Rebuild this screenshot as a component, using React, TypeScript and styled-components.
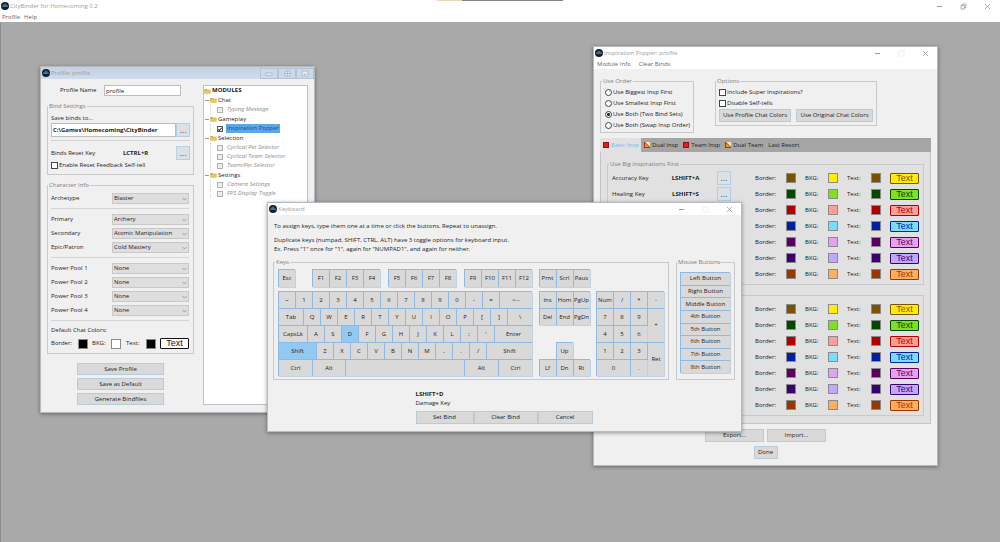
import React from "react";
import styled, { createGlobalStyle, css } from "styled-components";

const GlobalStyle = createGlobalStyle`
  *, *::before, *::after { box-sizing: border-box; }
  body {
    margin: 0;
    background: #a9a9a9;
    color: #1c1c1c;
    font: 6px/9px "Open Sans", "Noto Sans", sans-serif;
  }
  button, input, select { font: inherit; color: inherit; margin: 0; }
`;

/* ---------- shared parts ---------- */

const Shell = styled.div`
  display: flex;
  flex-direction: column;
  min-height: 100vh;
`;

const AppHeader = styled.header`
  height: 22px;
  background: #fff;
  color: #8a8a8a;
`;

const Notch = styled.div`
  position: absolute;
  top: 0;
  left: 50%;
  width: 126px;
  height: 1px;
  margin-left: -63px;
  background: linear-gradient(90deg, #e8d9b4 0 20%, #858585 20% 100%);
`;

const TitleBar = styled.div<{ $tone?: "blue" }>`
  display: flex;
  align-items: center;
  height: 12px;
  padding-left: 1px;
  gap: 1px;
  color: #9d9d9d;
  background: ${(p) => (p.$tone === "blue" ? "linear-gradient(#c3d1e0, #cfdceb)" : "#fff")};
`;

const TitleText = styled.span`
  flex: 1;
`;

const WindowControls = styled.div<{ $right: number }>`
  display: flex;
  align-items: center;
  gap: 16px;
  padding-right: ${(p) => p.$right}px;
`;

const FrameControls = styled.div`
  display: flex;
`;

const ControlButton = styled.button`
  display: flex;
  align-items: center;
  justify-content: center;
  width: 8px;
  height: 10px;
  padding: 0;
  border: 0;
  background: none;
`;

const FrameButton = styled(ControlButton)`
  width: 18px;
  height: 11px;
  border: 1px solid #b3c3d6;
  background: #ccd9e7;
`;

const MenuBar = styled.nav<{ $gap: number }>`
  display: flex;
  gap: ${(p) => p.$gap}px;
  height: 10px;
  padding: 1px 2px 0;
`;

const MenuButton = styled.button`
  padding: 0;
  border: 0;
  background: none;
  color: #666;
`;

const Desktop = styled.main`
  position: relative;
  flex: 1;
  border-left: 1px solid #8d8d8d;
  background: #a9a9a9;
`;

const Window = styled.section<{ $x: number; $y: number; $w: number }>`
  position: absolute;
  left: ${(p) => p.$x}px;
  top: ${(p) => p.$y}px;
  width: ${(p) => p.$w}px;
  border: 1px solid #b4bac0;
  background: #f0f0f0;
  box-shadow: 0 1px 4px rgba(0, 0, 0, 0.4);
`;

const Group = styled.fieldset<{ $pad: string; $w?: number }>`
  width: ${(p) => (p.$w ? `${p.$w}px` : "auto")};
  min-width: 0;
  margin: 0;
  padding: ${(p) => p.$pad};
  border: 1px solid #c9c9c9;
`;

const GroupTitle = styled.legend`
  height: 9px;
  margin-left: -3px;
  padding: 0 1px;
  color: #7d7d7d;
`;

const PushButton = styled.button<{ $w?: number; $h?: number }>`
  width: ${(p) => (p.$w ? `${p.$w}px` : "auto")};
  height: ${(p) => p.$h ?? 13}px;
  padding: 0;
  border: 1px solid #b9cbd9;
  background: #d9d9d9;
  white-space: nowrap;
`;

const DotsButton = styled(PushButton)`
  flex: none;
  width: 14px;
  height: 14px;
  padding-bottom: 2px;
  background: #dce1e6;
  border-color: #b4d0e6;
  color: #555;
  font-size: 9px;
  font-weight: 400;
`;

const CheckLabel = styled.label`
  display: flex;
  align-items: center;
  gap: 1px;
  height: 11px;
  white-space: nowrap;
`;

const CheckBox = styled.input`
  appearance: none;
  flex: none;
  width: 7px;
  height: 7px;
  border: 1px solid #444;
  background: #fff;
`;

const Radio = styled(CheckBox)`
  border-radius: 50%;
  &:checked {
    background: radial-gradient(circle, #222 0 1px, #fff 2px);
  }
`;

const Swatch = styled.button<{ $color: string }>`
  width: 10px;
  height: 10px;
  padding: 0;
  border: 1px solid #8a8a8a;
  background: ${(p) => p.$color};
`;

const Preview = styled.output<{ $ink: string; $fill: string }>`
  display: block;
  height: 11px;
  border: 1px solid ${(p) => p.$ink};
  border-radius: 1px;
  background: ${(p) => p.$fill};
  color: ${(p) => p.$ink};
  font: 9px/9px "Liberation Sans", sans-serif;
  text-align: center;
`;

/* ---------- icons ---------- */

const AppIcon = () => (
  <svg width="8" height="8" viewBox="0 0 16 16" aria-hidden="true">
    <circle cx="8" cy="8" r="8" fill="#10202f" />
    <path d="M2 9h12M4 9V6h2v3M7 9V4h2v5M10 9V6h2v3" stroke="#5f8fb8" strokeWidth="1.2" fill="none" />
  </svg>
);

const Minimize = () => (
  <svg width="7" height="7" aria-hidden="true"><path d="M1 3.500h5" stroke="#999" /></svg>
);
const Maximize = () => (
  <svg width="7" height="7" aria-hidden="true"><rect x="1" y="1" width="5" height="5" fill="none" stroke="#ececec" strokeWidth=".8" /></svg>
);
const Restore = () => (
  <svg width="7" height="7" aria-hidden="true">
    <path d="M1 2.500h3.500V6H1zM2.500 2.500V1H6v3.500H4.500" fill="none" stroke="#999" strokeWidth=".8" />
  </svg>
);
const Close = () => (
  <svg width="7" height="7" aria-hidden="true"><path d="M1 1l5 5M6 1L1 6" stroke="#999" strokeWidth=".8" /></svg>
);
const FrameMin = () => (
  <svg width="8" height="7" aria-hidden="true"><rect x="1" y="3" width="6" height="2.500" fill="#e6eef6" stroke="#9dabba" strokeWidth=".7" /></svg>
);
const FrameMax = () => (
  <svg width="7" height="7" aria-hidden="true"><path d="M1 1h5v5H1zM1 3.500h5M3.500 1v5" fill="#e6eef6" stroke="#9dabba" strokeWidth=".7" /></svg>
);
const FrameClose = () => (
  <svg width="8" height="7" aria-hidden="true"><path d="M1 1h6v5H1zM2.500 3.500L4 5l1.500-1.500" fill="#e6eef6" stroke="#9dabba" strokeWidth=".7" /></svg>
);
const Folder = () => (
  <svg width="7" height="6" viewBox="0 0 7 6" aria-hidden="true">
    <path d="M.3 1h2.400l.6.700H6.500V5.500H.3z" fill="#d2a93c" />
    <path d="M1.200 2.500H7L6.300 5.500H.5z" fill="#ecc967" />
  </svg>
);
const Chevron = styled.svg`
  grid-area: 1 / 1;
  justify-self: end;
  align-self: center;
  margin-right: 2px;
  pointer-events: none;
`;

const SystemControls = ({ restore = false }) => (
  <WindowControls $right={restore ? 9 : 8}>
    <ControlButton aria-label="Minimize"><Minimize /></ControlButton>
    <ControlButton aria-label="Maximize">{restore ? <Restore /> : <Maximize />}</ControlButton>
    <ControlButton aria-label="Close"><Close /></ControlButton>
  </WindowControls>
);

/* ---------- profile window ---------- */

const ProfileBody = styled.div`
  display: flex;
  justify-content: space-between;
  padding: 6px 6px 7px;
`;

const ProfileForm = styled.form`
  display: flex;
  flex-direction: column;
  gap: 6px;
  width: 147px;
`;

const NameRow = styled.div`
  display: grid;
  grid-template-columns: 44px 77px;
  align-items: center;
  padding-left: 13px;
`;

const TextBox = styled.input<{ $h: number }>`
  min-width: 0;
  width: 100%;
  height: ${(p) => p.$h}px;
  padding: 0 1px;
  border: 1px solid #bdbdbd;
  background: #fff;
`;

const PathRow = styled.div`
  display: flex;
  font-weight: 700;
`;

const ResetRow = styled.div`
  display: flex;
  align-items: center;
  justify-content: space-between;
`;

const Rule = styled.hr<{ $m: string }>`
  margin: ${(p) => p.$m};
  border: 0;
  border-top: 1px solid #d4d4d4;
`;

const FieldList = styled.div`
  display: grid;
  grid-template-columns: 1fr 77px;
  row-gap: 3px;
  align-items: center;
`;

const SelectWrap = styled.div`
  display: grid;
`;

const Select = styled.select`
  grid-area: 1 / 1;
  appearance: none;
  height: 11px;
  padding: 0 1px;
  border: 1px solid #c8c8c8;
  border-radius: 0;
  background: #dedede;
`;

const ChatRow = styled.div`
  display: grid;
  grid-template-columns: 27px 14px 19px 15px 20px 1fr 29px;
  align-items: center;
  margin-top: 3px;
`;

const SaveButtons = styled.div`
  display: flex;
  flex-direction: column;
  align-items: center;
  gap: 3px;
  margin-top: 3px;
`;

const Tree = styled.ul`
  width: 105px;
  margin: 0;
  padding: 0;
  list-style: none;
  border: 1px solid #bcc2c8;
  background: #fff;
`;

const SubTree = styled.ul`
  margin: 0;
  padding: 0;
  list-style: none;
`;

const TreeHead = styled.div<{ $root?: boolean }>`
  display: flex;
  align-items: center;
  gap: 1px;
  height: ${(p) => (p.$root ? 9 : 10)}px;
  padding-left: ${(p) => (p.$root ? 0 : 1)}px;
  font-weight: ${(p) => (p.$root ? 700 : 400)};
`;

const Expander = styled.span`
  width: 4px;
  height: 1px;
  background: #9a9a9a;
`;

const TreeItem = styled.label<{ $on?: boolean }>`
  display: flex;
  align-items: center;
  gap: 3px;
  height: 9px;
  margin-left: 6px;
  padding-left: 6px;
  border-left: 1px dotted #d0d0d0;
  color: #8b8b8b;
  font-style: italic;
  ${(p) => p.$on && css`
    color: #1d4f7d;
    font-style: normal;
  `}
`;

const TreeName = styled.span<{ $on?: boolean }>`
  padding: 0 1px;
  background: ${(p) => (p.$on ? "#5ba8e8" : "none")};
`;

const TreeCheck = styled(CheckBox)`
  width: 6px;
  height: 6px;
  border-color: #b0b0b0;
  background: #eee;
  &:checked {
    border-color: #555;
    background: #fff;
  }
  &:checked::after {
    content: "";
    display: block;
    width: 2px;
    height: 4px;
    margin-left: 1px;
    border: solid #222;
    border-width: 0 1px 1px 0;
    transform: rotate(40deg);
  }
`;

const MODULES: { name: string; items: string[] }[] = [
  { name: "Chat", items: ["Typing Message"] },
  { name: "Gameplay", items: ["Inspiration Popper"] },
  { name: "Selection", items: ["Cyclical Pet Selector", "Cyclical Team Selector", "Team/Pet Selector"] },
  { name: "Settings", items: ["Camera Settings", "FPS Display Toggle"] },
];

const PICKS: [string, string][][] = [
  [["Archetype", "Blaster"]],
  [["Primary", "Archery"], ["Secondary", "Atomic Manipulation"], ["Epic/Patron", "Cold Mastery"]],
  [["Power Pool 1", "None"], ["Power Pool 2", "None"], ["Power Pool 3", "None"], ["Power Pool 4", "None"]],
];

const Picker = ({ label, value }: { label: string; value: string }) => {
  const id = label.replace(/\W/g, "-").toLowerCase();
  return (
    <>
      <label htmlFor={id}>{label}</label>
      <SelectWrap>
        <Select id={id} defaultValue={value}><option>{value}</option></Select>
        <Chevron width="5" height="4"><path d="M.5 1l2 2 2-2" fill="none" stroke="#888" strokeWidth=".7" /></Chevron>
      </SelectWrap>
    </>
  );
};

const ProfileWindow = () => (
  <Window $x={39} $y={44} $w={275}>
    <TitleBar $tone="blue">
      <AppIcon />
      <TitleText>Profile: profile</TitleText>
      <FrameControls>
        <FrameButton aria-label="Minimize"><FrameMin /></FrameButton>
        <FrameButton aria-label="Maximize"><FrameMax /></FrameButton>
        <FrameButton aria-label="Close"><FrameClose /></FrameButton>
      </FrameControls>
    </TitleBar>
    <ProfileBody>
      <ProfileForm>
        <NameRow>
          <label htmlFor="name">Profile Name</label>
          <TextBox id="name" $h={11} defaultValue="profile" />
        </NameRow>
        <Group $pad="3px">
          <GroupTitle>Bind Settings</GroupTitle>
          <label htmlFor="path">Save binds to...</label>
          <PathRow>
            <TextBox id="path" $h={14} defaultValue="C:\Games\Homecoming\CityBinder" />
            <DotsButton type="button" aria-label="Browse">...</DotsButton>
          </PathRow>
          <Rule $m="3px 0 5px" />
          <ResetRow>
            <span>Binds Reset Key</span>
            <b>LCTRL+R</b>
            <DotsButton type="button" aria-label="Change reset key">...</DotsButton>
          </ResetRow>
          <CheckLabel><CheckBox type="checkbox" />Enable Reset Feedback Self-tell</CheckLabel>
        </Group>
        <Group $pad="3px 4px 4px 3px">
          <GroupTitle>Character Info</GroupTitle>
          {PICKS.map((set, i) => (
            <React.Fragment key={i}>
              <FieldList>
                {set.map(([label, value]) => <Picker key={label} label={label} value={value} />)}
              </FieldList>
              <Rule $m="4px 0 5px" />
            </React.Fragment>
          ))}
          <div>Default Chat Colors:</div>
          <ChatRow>
            <label htmlFor="c-border">Border:</label>
            <Swatch type="button" id="c-border" $color="#000" />
            <label htmlFor="c-bkg">BKG:</label>
            <Swatch type="button" id="c-bkg" $color="#fff" />
            <label htmlFor="c-text">Text:</label>
            <Swatch type="button" id="c-text" $color="#000" />
            <Preview $ink="#111" $fill="#fff">Text</Preview>
          </ChatRow>
        </Group>
        <SaveButtons>
          <PushButton type="button" $w={87} $h={12}>Save Profile</PushButton>
          <PushButton type="button" $w={87} $h={12}>Save as Default</PushButton>
          <PushButton type="button" $w={87} $h={12}>Generate Bindfiles</PushButton>
        </SaveButtons>
      </ProfileForm>
      <Tree>
        <li>
          <TreeHead $root><Folder />MODULES</TreeHead>
          <SubTree>
            {MODULES.map((m) => (
              <li key={m.name}>
                <TreeHead><Expander /><Folder />{m.name}</TreeHead>
                {m.items.map((item) => {
                  const on = item === "Inspiration Popper";
                  return (
                    <TreeItem key={item} $on={on}>
                      <TreeCheck type="checkbox" defaultChecked={on} />
                      <TreeName $on={on}>{item}</TreeName>
                    </TreeItem>
                  );
                })}
              </li>
            ))}
          </SubTree>
        </li>
      </Tree>
    </ProfileBody>
  </Window>
);

/* ---------- inspiration window ---------- */

const PopperMenu = styled(MenuBar)`
  padding: 1px 3px 0;
  background: #fff;
`;

const PopperBody = styled.div`
  padding: 8px 6px 6px;
`;

const OptionRow = styled.div`
  display: flex;
  align-items: flex-start;
  gap: 21px;
  margin-bottom: 5px;
`;

const ButtonPair = styled.div<{ $gap: number }>`
  display: flex;
  justify-content: center;
  gap: ${(p) => p.$gap}px;
`;

const TabStrip = styled.div`
  display: flex;
  height: 14px;
  background: #a5a5a5;
`;

const Tab = styled.button<{ $active?: boolean }>`
  display: flex;
  align-items: center;
  gap: 2px;
  padding: 0 2px 0 3px;
  border: 0;
  background: ${(p) => (p.$active ? "#e1e1e1" : "none")};
  color: ${(p) => (p.$active ? "#7db4e6" : "#222")};
`;

const TabPanel = styled.div`
  display: flex;
  flex-direction: column;
  gap: 10px;
  padding: 8px 6px 7px;
  border: 1px solid #c4c4c4;
  border-top: 0;
  background: #e1e1e1;
`;

const BindRow = styled.div`
  display: grid;
  grid-template-columns: 42px 63px 1fr 31px 19px 23px 19px 24px 19px 29px;
  align-items: center;
  height: 16px;
`;

const Combo = styled.b`
  text-align: center;
`;

const DotsCell = styled.span`
  display: flex;
`;

const Footer = styled.div`
  display: flex;
  flex-direction: column;
  align-items: center;
  gap: 4px;
  margin-top: 5px;
`;

const RedIcon = () => (
  <svg width="6" height="6" aria-hidden="true"><rect width="6" height="6" fill="#8e1010" /><rect x="1" y="1" width="4" height="4" fill="#e02020" /></svg>
);
const DualIcon = () => (
  <svg width="6" height="6" aria-hidden="true"><rect width="6" height="6" fill="#b3261a" /><path d="M1 0h5v5z" fill="#f7e9a0" /><path d="M1 1v4h4z" fill="#f0a020" /></svg>
);

const COLORS: [string, string][] = [
  ["#7a5200", "#ffee00"],
  ["#004a00", "#80e020"],
  ["#b00000", "#ff9e98"],
  ["#0020a0", "#78dcff"],
  ["#5c0060", "#e6a2f2"],
  ["#380070", "#c0a8ff"],
  ["#983800", "#ffae60"],
];

const KEYS: Record<number, [string, string]> = {
  0: ["Accuracy Key", "LSHIFT+A"],
  1: ["Healing Key", "LSHIFT+S"],
};

const BindRows = ({ group, keys }: { group: string; keys: Record<number, [string, string]> }) => (
  <>
    {COLORS.map(([ink, fill], i) => {
      const id = `${group}-${i}`;
      return (
        <BindRow key={id}>
          <span>{keys[i]?.[0]}</span>
          <Combo>{keys[i]?.[1]}</Combo>
          <DotsCell>{keys[i] && <DotsButton aria-label={`Change ${keys[i][0]}`}>...</DotsButton>}</DotsCell>
          <label htmlFor={`${id}-b`}>Border:</label>
          <Swatch id={`${id}-b`} $color={ink} />
          <label htmlFor={`${id}-g`}>BKG:</label>
          <Swatch id={`${id}-g`} $color={fill} />
          <label htmlFor={`${id}-t`}>Text:</label>
          <Swatch id={`${id}-t`} $color={ink} />
          <Preview $ink={ink} $fill={fill}>Text</Preview>
        </BindRow>
      );
    })}
  </>
);

const ORDERS = ["Use Biggest Insp First", "Use Smallest Insp First", "Use Both (Two Bind Sets)", "Use Both (Swap Insp Order)"];

const PopperWindow = () => (
  <Window $x={592} $y={24} $w={345}>
    <TitleBar><AppIcon /><TitleText>Inspiration Popper: profile</TitleText><SystemControls /></TitleBar>
    <PopperMenu $gap={8}><MenuButton>Module Info</MenuButton><MenuButton>Clear Binds</MenuButton></PopperMenu>
    <PopperBody>
      <OptionRow>
        <Group $pad="1px 4px" $w={94}>
          <GroupTitle>Use Order</GroupTitle>
          {ORDERS.map((o, i) => (
            <CheckLabel key={o}><Radio type="radio" name="order" defaultChecked={i === 2} />{o}</CheckLabel>
          ))}
        </Group>
        <Group $pad="1px 3px 3px" $w={162}>
          <GroupTitle>Options</GroupTitle>
          <CheckLabel><CheckBox type="checkbox" />Include Super Inspirations?</CheckLabel>
          <CheckLabel><CheckBox type="checkbox" />Disable Self-tells</CheckLabel>
          <ButtonPair $gap={5}>
            <PushButton $w={72}>Use Profile Chat Colors</PushButton>
            <PushButton $w={77}>Use Original Chat Colors</PushButton>
          </ButtonPair>
        </Group>
      </OptionRow>
      <TabStrip role="tablist">
        <Tab role="tab" $active><RedIcon />Basic Insp</Tab>
        <Tab role="tab"><DualIcon />Dual Insp</Tab>
        <Tab role="tab"><RedIcon />Team Insp</Tab>
        <Tab role="tab"><DualIcon />Dual Team</Tab>
        <Tab role="tab">Last Resort</Tab>
      </TabStrip>
      <TabPanel role="tabpanel">
        <Group $pad="1px 4px 2px">
          <GroupTitle>Use Big Inspirations First</GroupTitle>
          <BindRows group="big" keys={KEYS} />
        </Group>
        <Group $pad="5px 4px 2px">
          <BindRows group="small" keys={{}} />
        </Group>
      </TabPanel>
      <Footer>
        <ButtonPair $gap={3}>
          <PushButton $w={59}>Export...</PushButton>
          <PushButton $w={59}>Import...</PushButton>
        </ButtonPair>
        <PushButton $w={24}>Done</PushButton>
      </Footer>
    </PopperBody>
  </Window>
);

/* ---------- keyboard window ---------- */

const KeyboardBody = styled.div`
  padding: 7px 6px 7px 5px;
`;

const Help = styled.p<{ $m: string }>`
  margin: ${(p) => p.$m};
`;

const Boards = styled.div`
  display: grid;
  grid-template-columns: 1fr 59px;
  gap: 7px;
`;

const KeyArea = styled.div`
  display: grid;
  grid-template-columns: 254px 51px 68px;
  grid-template-rows: 18px 85px;
  gap: 4px 0;
  justify-content: space-between;
`;

const KeyRows = styled.div`
  display: grid;
  grid-template-rows: repeat(5, 17px);
`;

const KeyRow = styled.div`
  display: flex;
`;

const KeyCluster = styled.div<{ $cols: number }>`
  display: grid;
  grid-template-columns: repeat(${(p) => p.$cols}, 17px);
  grid-auto-rows: 17px;
`;

const Key = styled.button<{ $w?: number; $on?: boolean; $area?: string; $gap?: number }>`
  flex: 0 0 ${(p) => p.$w ?? 17}px;
  min-width: 0;
  margin-left: ${(p) => p.$gap ?? 0}px;
  padding: 0;
  grid-area: ${(p) => p.$area ?? "auto"};
  border: 0 solid #8fb9e3;
  border-width: 1px 0 0 1px;
  background: ${(p) => (p.$on ? "#91c9f2" : "#d9d9d9")};
  box-shadow: 1px 1px 0 #c0d2e2;
  white-space: nowrap;
`;

const MouseKeys = styled.div`
  display: grid;
  grid-template-rows: repeat(8, 1fr);
  height: 101px;
`;

const BindPanel = styled.div`
  width: 177px;
  margin: 10px auto 0;
`;

const BindActions = styled.div`
  display: grid;
  grid-template-columns: 58px 64px 55px;
  margin-top: 3px;
`;

type K = [string, number?, boolean?];
const chars = (s: string): K[] => s.split("").map((c) => [c] as K);

const FUNCTION_KEYS: [string, number][] = [
  ["Esc", 0], ["F1", 17], ["F2", 0], ["F3", 0], ["F4", 0],
  ["F5", 8], ["F6", 0], ["F7", 0], ["F8", 0],
  ["F9", 8], ["F10", 0], ["F11", 0], ["F12", 0],
];

const MAIN_KEYS: K[][] = [
  [...chars("~1234567890-="), ["<--", 33]],
  [["Tab", 25], ...chars("QWERTYUIOP[]"), ["\\", 25]],
  [["CapsLk", 29], ...chars("AS"), ["D", 17, true], ...chars("FGHJKL;'"), ["Enter", 38]],
  [["Shift", 38, true], ...chars("ZXCVBNM,./"), ["Shift", 46]],
  [["Ctrl", 34], ["Alt", 33], ["", 119], ["Alt", 34], ["Ctrl", 34]],
];

const NAV_KEYS: [string, string][] = [
  ["Ins", "1 / 1"], ["Hom", "1 / 2"], ["PgUp", "1 / 3"],
  ["Del", "2 / 1"], ["End", "2 / 2"], ["PgDn", "2 / 3"],
  ["Up", "4 / 2"], ["Lf", "5 / 1"], ["Dn", "5 / 2"], ["Rt", "5 / 3"],
];

const PAD_KEYS: [string, string][] = [
  ["Num", "1 / 1"], ["/", "1 / 2"], ["*", "1 / 3"], ["-", "1 / 4"],
  ["7", "2 / 1"], ["8", "2 / 2"], ["9", "2 / 3"], ["+", "2 / 4 / 4 / 5"],
  ["4", "3 / 1"], ["5", "3 / 2"], ["6", "3 / 3"],
  ["1", "4 / 1"], ["2", "4 / 2"], ["3", "4 / 3"], ["Ret", "4 / 4 / 6 / 5"],
  ["0", "5 / 1 / 6 / 3"], [".", "5 / 3"],
];

const MOUSE_KEYS = ["Left Button", "Right Button", "Middle Button", "4th Button", "5th Button", "6th Button", "7th Button", "8th Button"];

const KeyboardWindow = () => (
  <Window $x={266} $y={180} $w={475}>
    <TitleBar><AppIcon /><TitleText>Keyboard</TitleText><SystemControls /></TitleBar>
    <KeyboardBody>
      <Help $m="0 1px 5px">To assign keys, type them one at a time or click the buttons. Repeat to unassign.</Help>
      <Help $m="0 1px 4px">
        Duplicate keys (numpad, SHIFT, CTRL, ALT) have 3 toggle options for keyboard input.<br />
        Ex. Press "1" once for "1", again for "NUMPAD1", and again for neither.
      </Help>
      <Boards>
        <Group $pad="2px 4px 3px">
          <GroupTitle>Keys</GroupTitle>
          <KeyArea>
            <KeyRow>
              {FUNCTION_KEYS.map(([k, gap]) => <Key key={k} $gap={gap}>{k}</Key>)}
            </KeyRow>
            <KeyRow>{["Prnt", "Scrl", "Paus"].map((k) => <Key key={k}>{k}</Key>)}</KeyRow>
            <span />
            <KeyRows>
              {MAIN_KEYS.map((row, i) => (
                <KeyRow key={i}>
                  {row.map(([k, w, on], j) => (
                    <Key key={j} $w={w} $on={on} aria-label={k || "Space"}>{k}</Key>
                  ))}
                </KeyRow>
              ))}
            </KeyRows>
            <KeyCluster $cols={3}>{NAV_KEYS.map(([k, a]) => <Key key={k} $area={a}>{k}</Key>)}</KeyCluster>
            <KeyCluster $cols={4}>{PAD_KEYS.map(([k, a]) => <Key key={k} $area={a}>{k}</Key>)}</KeyCluster>
          </KeyArea>
        </Group>
        <Group $pad="5px 4px 3px 3px">
          <GroupTitle>Mouse Buttons</GroupTitle>
          <MouseKeys>{MOUSE_KEYS.map((k) => <Key key={k}>{k}</Key>)}</MouseKeys>
        </Group>
      </Boards>
      <BindPanel>
        <b>LSHIFT+D</b>
        <div>Damage Key</div>
        <BindActions>
          <PushButton>Set Bind</PushButton>
          <PushButton>Clear Bind</PushButton>
          <PushButton>Cancel</PushButton>
        </BindActions>
      </BindPanel>
    </KeyboardBody>
  </Window>
);

export default function App() {
  return (
    <Shell>
      <GlobalStyle />
      <AppHeader>
        <Notch />
        <TitleBar><AppIcon /><TitleText>CityBinder for Homecoming 0.2</TitleText><SystemControls restore /></TitleBar>
        <MenuBar $gap={4}><MenuButton>Profile</MenuButton><MenuButton>Help</MenuButton></MenuBar>
      </AppHeader>
      <Desktop>
        <ProfileWindow />
        <PopperWindow />
        <KeyboardWindow />
      </Desktop>
    </Shell>
  );
}
